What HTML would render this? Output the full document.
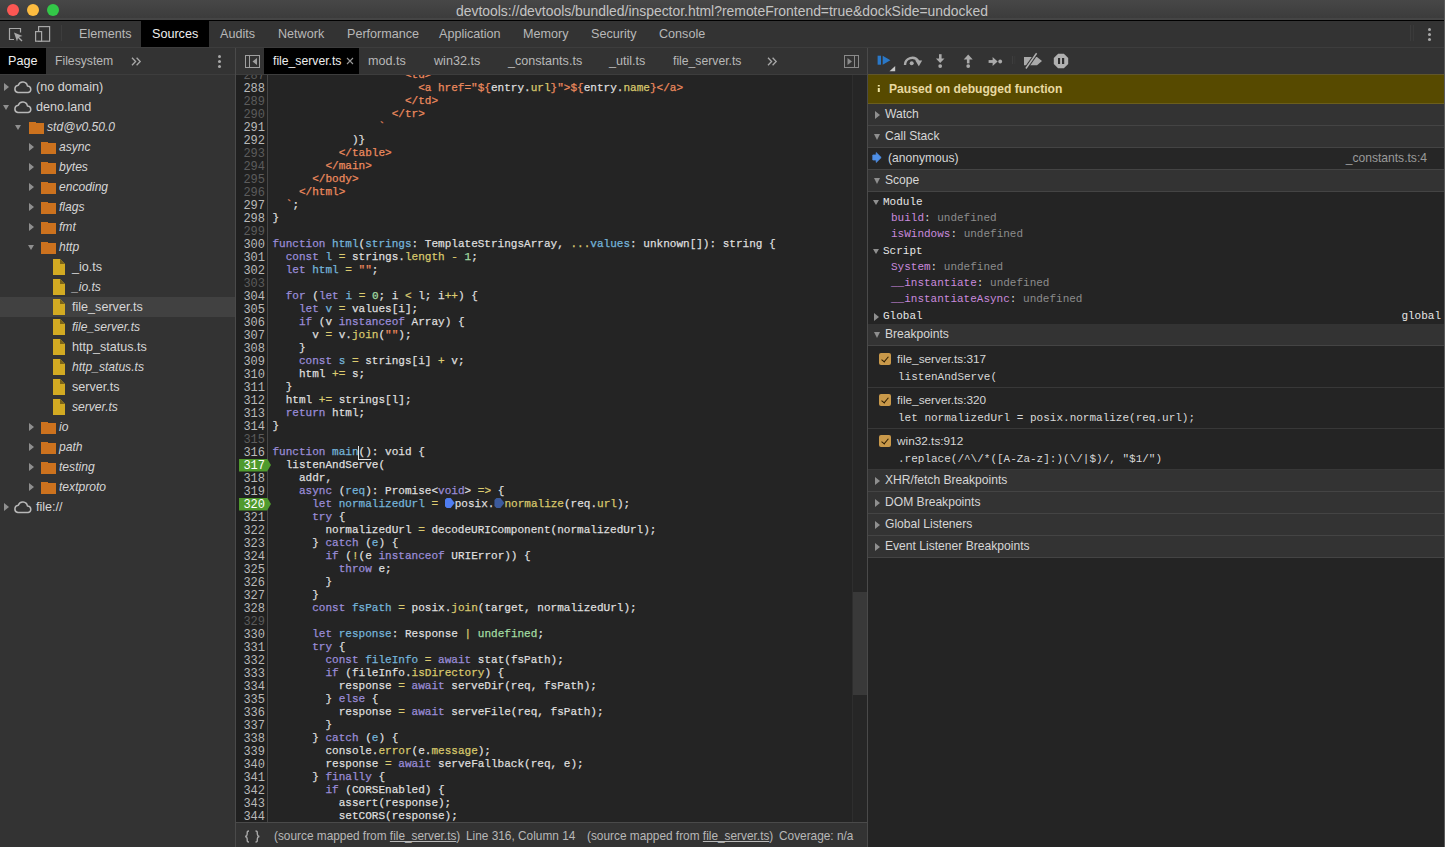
<!DOCTYPE html>
<html><head><meta charset="utf-8">
<style>
*{box-sizing:border-box;margin:0;padding:0}
html,body{width:1445px;height:847px;overflow:hidden;background:#242424;font-family:"Liberation Sans",sans-serif;font-size:12.6px;color:#d0d0d0}
.abs{position:absolute}
/* title bar */
#title{left:0;top:0;width:1445px;height:21px;background:linear-gradient(#474747,#3c3c3c 90%,#454545 90%);border-bottom:1px solid #000}
#title .t{position:absolute;left:456px;top:3px;font-size:13.92px;color:#c4c4c4;white-space:nowrap;letter-spacing:0}
.tl{position:absolute;top:4px;width:12px;height:12px;border-radius:50%}
/* main toolbar */
#mtb{left:0;top:21px;width:1445px;height:27px;background:#333;border-bottom:1px solid #3d3d3d}
.mt{position:absolute;top:0;height:26px;line-height:27px;font-size:12.6px;color:#b8b8b8;white-space:nowrap}.mt.sel{color:#eee}
#mtb .tab{padding:0 12px;height:26px;line-height:27px;color:#b8b8b8;white-space:nowrap}
#mtb .tab.sel{background:#000;color:#eee}
/* sidebar */
#side{left:0;top:48px;width:235px;height:800px;background:#333}
#side .tb{position:absolute;left:0;top:0;width:235px;height:27px;border-bottom:1px solid #3d3d3d}
#side .tab{position:absolute;top:0;height:26px;line-height:26px;color:#b8b8b8}
.tree{position:absolute;left:0;top:29px;width:235px}
.tr{position:relative;height:20px;line-height:20px;white-space:nowrap;color:#d6d6d6}
.tr.it{font-style:italic;font-size:12.1px}
.tr.sel{background:#414141}
.arr{position:absolute;top:6px;width:0;height:0}
.arr.r{border-left:5px solid #8f8f8f;border-top:4px solid transparent;border-bottom:4px solid transparent}
.arr.d{border-top:5px solid #8f8f8f;border-left:3.5px solid transparent;border-right:3.5px solid transparent;top:8px}
.fold{position:absolute;top:6px;width:14.5px;height:11px;background:#cc721e}
.fold:before{content:"";position:absolute;left:0;top:-1.5px;width:7px;height:2px;background:#cc721e}
.file{position:absolute;top:2px;width:12px;height:16px;background:#d2aa22;clip-path:polygon(0 0,7px 0,12px 5px,12px 16px,0 16px)}
.file:after{content:"";position:absolute;left:7px;top:0;width:5px;height:5px;background:#7a6418;clip-path:polygon(0 0,0 100%,100% 100%)}
/* sidebar divider */
#div1{left:235px;top:48px;width:1px;height:800px;background:#4a4a4a}
/* editor */
#etb{left:236px;top:48px;width:631px;height:27px;background:#333;border-bottom:1px solid #3d3d3d}
#etb .tab{position:absolute;top:0;height:26px;line-height:26px;color:#b8b8b8;white-space:nowrap}
#etb .tab.sel{background:#000;color:#eee}
#editor{left:236px;top:75px;width:631px;height:747px;background:#242424;overflow:hidden}
#gutter{position:absolute;left:0;top:-5px;width:32px;background:#202020;height:800px;border-right:1px solid #464646}
.ln{height:13px;line-height:13px;font-family:"Liberation Mono",monospace;font-size:12px;text-align:right;padding-right:2px;color:#b9b9b9;position:relative}
.ln.dim{color:#5c5c5c}
.ln.bp{color:#fff}
.ln.bp:before{content:"";position:absolute;left:3px;top:-1.5px;width:32px;height:13px;background:#4f9a2d;clip-path:polygon(0 0,28px 0,32px 6.5px,28px 13px,0 13px);z-index:-1}
.ln.bp{z-index:1}
.cur{position:relative;display:inline-block;width:0;height:13px;vertical-align:top}.cur:before{content:"";position:absolute;left:-0.5px;top:0;width:1px;height:13px;background:#e8e8e8}.cur:after{content:"";position:absolute;left:-0.5px;top:12.5px;width:13px;height:1px;background:#e8e8e8}
#code{position:absolute;left:36.5px;top:-6px;font-family:"Liberation Mono",monospace;font-size:11.04px;color:#dedede;-webkit-text-stroke:0.25px currentColor}
.cl{height:13px;line-height:13px;white-space:pre}
.k{color:#9a8cd8}.d{color:#74b4da}.o{color:#dccb70}.p{color:#d8c86c}.n{color:#a2dca2}.s{color:#ec8a5e}.a{color:#a2dca2}
.M{display:inline-block;position:relative;width:10px;height:10px;vertical-align:-1px;-webkit-text-stroke:0}.M:before{content:"";position:absolute;left:0;top:0;width:10px;height:10px;background:#4f7df0;clip-path:polygon(2px 0,6px 0,10px 5px,6px 10px,2px 10px,0 8px,0 2px)}.M.d:before{background:#3c5a9c}
#vscroll{left:852px;top:75px;width:15px;height:747px;background:#262626;border-left:1px solid #2e2e2e}
#vthumb{left:853px;top:592px;width:14px;height:103px;background:#393939}
#status{left:236px;top:822px;width:631px;height:25px;background:#333;border-top:1px solid #4a4a4a;white-space:nowrap;color:#b8b8b8}
.st{position:absolute;top:0;line-height:27px;font-size:11.85px}
/* right pane */
#div2{left:867px;top:48px;width:1px;height:800px;background:#4a4a4a}
#right{left:868px;top:48px;width:577px;height:800px;background:#242424}
#rtb{position:absolute;left:0;top:0;width:577px;height:27px;background:#333;border-bottom:1px solid #3d3d3d}
#banner{position:absolute;left:0;top:26px;width:577px;height:30px;background:#574a00;border-top:1px solid #60562a;border-bottom:1px solid #6b5e1c;color:#e8d9a0;font-weight:bold;line-height:28px;font-size:12.1px}
.sh{position:absolute;left:0;width:577px;height:22px;background:#333;border-bottom:1px solid #444;line-height:21px;color:#d6d6d6;font-size:12.1px}
.sh .arr.r{left:7px;top:7px}.sh .arr.d{left:6px;top:8px;border-top-width:6px}
.sh span{position:absolute;left:17px}
.mono{font-family:"Liberation Mono",monospace;font-size:11px}
.keb{position:absolute;width:3px;height:3px;border-radius:1.5px;background:#a8a8a8;box-shadow:0 5px 0 #a8a8a8,0 10px 0 #a8a8a8}
.cs{position:absolute;left:0;width:577px;height:22px;line-height:22px;background:#262626;border-bottom:1px solid #444;color:#d6d6d6}
.sc{position:absolute;white-space:pre;line-height:16px;color:#d9d9d9}
.sc.b{color:#e6e6e6}
.pn{color:#c98ade}.un{color:#8c8c8c}
.bpi{position:absolute;left:0;width:577px;height:41px;border-bottom:1px solid #383838}
.cb{position:absolute;left:11px;top:6px;width:12px;height:12px;border-radius:2px;background:#c9994a}
.cb:after{content:"";position:absolute;left:4px;top:1.5px;width:3px;height:6px;border-right:1.6px solid #2a1a00;border-bottom:1.6px solid #2a1a00;transform:rotate(40deg)}
.bt{position:absolute;left:29px;top:5px;line-height:14px;color:#d6d6d6;font-size:11.8px}
.bc{position:absolute;left:30px;top:23px;line-height:14px;color:#d9d9d9;white-space:pre}

</style></head><body>
<div id="title" class="abs">
  <div class="tl" style="left:7px;background:#fc5753"></div>
  <div class="tl" style="left:27px;background:#fdbc40"></div>
  <div class="tl" style="left:47px;background:#33c748"></div>
  <div class="t">devtools://devtools/bundled/inspector.html?remoteFrontend=true&amp;dockSide=undocked</div>
</div>
<div id="mtb" class="abs">
  <svg style="position:absolute;left:8px;top:6px" width="16" height="15" viewBox="0 0 16 15"><path d="M6 12.5 H1.5 V1.5 H12.5 V5.5" fill="none" stroke="#a8a8a8" stroke-width="1.2"/><path d="M6 5.5 L14.5 9 L11 10 L14.5 13.5 L13.5 14.5 L10 11 L9 14.5 Z" fill="#a8a8a8"/></svg>
  <svg style="position:absolute;left:34px;top:4px" width="18" height="18" viewBox="0 0 18 18"><rect x="4.6" y="1.6" width="11" height="14.6" fill="none" stroke="#a8a8a8" stroke-width="1.2"/><rect x="1.6" y="6.6" width="6" height="9.6" fill="#333" stroke="#a8a8a8" stroke-width="1.2"/></svg>
  <div style="position:absolute;left:61px;top:4px;width:1px;height:16px;background:#3d3d3d"></div>
  <div style="position:absolute;left:1410px;top:4px;width:1px;height:16px;background:#3c3c3c"></div><div style="position:absolute;left:1413px;top:4px;width:1px;height:16px;background:#3a3a3a"></div>
  <div class="keb" style="left:1428px;top:7px"></div>
  <div style="position:absolute;left:141px;top:0;width:68px;height:26px;background:#000"></div>
  <span class="mt" style="left:79px">Elements</span><span class="mt sel" style="left:152px">Sources</span><span class="mt" style="left:220px">Audits</span><span class="mt" style="left:278px">Network</span><span class="mt" style="left:347px">Performance</span><span class="mt" style="left:439px">Application</span><span class="mt" style="left:523px">Memory</span><span class="mt" style="left:591px">Security</span><span class="mt" style="left:659px">Console</span>
</div>
<div id="side" class="abs">
  <div class="tb">
    <div class="tab" style="left:0;width:46px;background:#000;color:#eee;padding-left:8px">Page</div>
    <div class="tab" style="left:55px;font-size:12.2px">Filesystem</div>
    <svg style="position:absolute;left:131px;top:9px" width="11" height="9" viewBox="0 0 11 9"><path d="M1 0.8 L4.6 4.5 L1 8.2 M5.6 0.8 L9.2 4.5 L5.6 8.2" fill="none" stroke="#a8a8a8" stroke-width="1.3"/></svg>
    <div class="keb" style="left:218px;top:7px"></div>
  </div>
  <div class="tree">
<div class="tr"><i class="arr r" style="left:4px"></i><svg class="cloud" width="19" height="13" viewBox="0 0 19 13" style="position:absolute;top:3.5px;left:14px"><path d="M3.8 11.6 A3.7 3.7 0 0 1 4.3 4.3 A4.7 4.7 0 0 1 13.4 4.9 A3.4 3.4 0 0 1 14.2 11.6 Z" fill="none" stroke="#b8b8b8" stroke-width="1.5" stroke-linejoin="round"/></svg><span style="position:absolute;left:36px">(no domain)</span></div>
<div class="tr"><i class="arr d" style="left:3px"></i><svg class="cloud" width="19" height="13" viewBox="0 0 19 13" style="position:absolute;top:3.5px;left:14px"><path d="M3.8 11.6 A3.7 3.7 0 0 1 4.3 4.3 A4.7 4.7 0 0 1 13.4 4.9 A3.4 3.4 0 0 1 14.2 11.6 Z" fill="none" stroke="#b8b8b8" stroke-width="1.5" stroke-linejoin="round"/></svg><span style="position:absolute;left:36px">deno.land</span></div>
<div class="tr it"><i class="arr d" style="left:15px"></i><i class="fold" style="left:29px"></i><span style="position:absolute;left:47px">std@v0.50.0</span></div>
<div class="tr it"><i class="arr r" style="left:29px"></i><i class="fold" style="left:41px"></i><span style="position:absolute;left:59px">async</span></div>
<div class="tr it"><i class="arr r" style="left:29px"></i><i class="fold" style="left:41px"></i><span style="position:absolute;left:59px">bytes</span></div>
<div class="tr it"><i class="arr r" style="left:29px"></i><i class="fold" style="left:41px"></i><span style="position:absolute;left:59px">encoding</span></div>
<div class="tr it"><i class="arr r" style="left:29px"></i><i class="fold" style="left:41px"></i><span style="position:absolute;left:59px">flags</span></div>
<div class="tr it"><i class="arr r" style="left:29px"></i><i class="fold" style="left:41px"></i><span style="position:absolute;left:59px">fmt</span></div>
<div class="tr it"><i class="arr d" style="left:28px"></i><i class="fold" style="left:41px"></i><span style="position:absolute;left:59px">http</span></div>
<div class="tr"><i class="file" style="left:53px"></i><span style="position:absolute;left:72px">_io.ts</span></div>
<div class="tr it"><i class="file" style="left:53px"></i><span style="position:absolute;left:72px">_io.ts</span></div>
<div class="tr sel"><i class="file" style="left:53px"></i><span style="position:absolute;left:72px">file_server.ts</span></div>
<div class="tr it"><i class="file" style="left:53px"></i><span style="position:absolute;left:72px">file_server.ts</span></div>
<div class="tr"><i class="file" style="left:53px"></i><span style="position:absolute;left:72px">http_status.ts</span></div>
<div class="tr it"><i class="file" style="left:53px"></i><span style="position:absolute;left:72px">http_status.ts</span></div>
<div class="tr"><i class="file" style="left:53px"></i><span style="position:absolute;left:72px">server.ts</span></div>
<div class="tr it"><i class="file" style="left:53px"></i><span style="position:absolute;left:72px">server.ts</span></div>
<div class="tr it"><i class="arr r" style="left:29px"></i><i class="fold" style="left:41px"></i><span style="position:absolute;left:59px">io</span></div>
<div class="tr it"><i class="arr r" style="left:29px"></i><i class="fold" style="left:41px"></i><span style="position:absolute;left:59px">path</span></div>
<div class="tr it"><i class="arr r" style="left:29px"></i><i class="fold" style="left:41px"></i><span style="position:absolute;left:59px">testing</span></div>
<div class="tr it"><i class="arr r" style="left:29px"></i><i class="fold" style="left:41px"></i><span style="position:absolute;left:59px">textproto</span></div>
<div class="tr"><i class="arr r" style="left:4px"></i><svg class="cloud" width="19" height="13" viewBox="0 0 19 13" style="position:absolute;top:3.5px;left:14px"><path d="M3.8 11.6 A3.7 3.7 0 0 1 4.3 4.3 A4.7 4.7 0 0 1 13.4 4.9 A3.4 3.4 0 0 1 14.2 11.6 Z" fill="none" stroke="#b8b8b8" stroke-width="1.5" stroke-linejoin="round"/></svg><span style="position:absolute;left:36px">file://</span></div>
  </div>
</div>
<div id="div1" class="abs"></div>
<div id="etb" class="abs">
  <svg style="position:absolute;left:8px;top:6px" width="17" height="15" viewBox="0 0 17 15"><rect x="1.5" y="1.5" width="14" height="12" fill="none" stroke="#a0a0a0" stroke-width="1"/><path d="M5.5 1.5 V13.5" stroke="#a0a0a0" stroke-width="1"/><path d="M13 4 L8.5 7.5 L13 11 Z" fill="#a0a0a0"/></svg>
  <svg style="position:absolute;left:531px;top:9px" width="11" height="9" viewBox="0 0 11 9"><path d="M1 0.8 L4.6 4.5 L1 8.2 M5.6 0.8 L9.2 4.5 L5.6 8.2" fill="none" stroke="#a8a8a8" stroke-width="1.3"/></svg>
  <svg style="position:absolute;left:607px;top:6px" width="17" height="15" viewBox="0 0 17 15"><rect x="1.5" y="1.5" width="14" height="12" fill="none" stroke="#8a8a8a" stroke-width="1"/><path d="M11.5 1.5 V13.5" stroke="#8a8a8a" stroke-width="1"/><path d="M4.5 4 L9 7.5 L4.5 11 Z" fill="#8a8a8a"/></svg>
  <div class="tab sel" style="left:28px;width:95px;padding-left:9px;font-size:12.2px">file_server.ts<svg style="position:absolute;left:82px;top:9px" width="8" height="8" viewBox="0 0 8 8"><path d="M1 1 L7 7 M7 1 L1 7" stroke="#9a9a9a" stroke-width="1.1"/></svg></div>
  <div class="tab" style="left:132px">mod.ts</div>
  <div class="tab" style="left:198px">win32.ts</div>
  <div class="tab" style="left:272px">_constants.ts</div>
  <div class="tab" style="left:373px">_util.ts</div>
  <div class="tab" style="left:437px;font-size:12.2px">file_server.ts</div>
</div>
<div id="editor" class="abs">
  <div id="gutter">
<div class="ln dim">287</div>
<div class="ln">288</div>
<div class="ln dim">289</div>
<div class="ln dim">290</div>
<div class="ln">291</div>
<div class="ln">292</div>
<div class="ln dim">293</div>
<div class="ln dim">294</div>
<div class="ln dim">295</div>
<div class="ln dim">296</div>
<div class="ln">297</div>
<div class="ln">298</div>
<div class="ln dim">299</div>
<div class="ln">300</div>
<div class="ln">301</div>
<div class="ln">302</div>
<div class="ln dim">303</div>
<div class="ln">304</div>
<div class="ln">305</div>
<div class="ln">306</div>
<div class="ln">307</div>
<div class="ln">308</div>
<div class="ln">309</div>
<div class="ln">310</div>
<div class="ln">311</div>
<div class="ln">312</div>
<div class="ln">313</div>
<div class="ln">314</div>
<div class="ln dim">315</div>
<div class="ln">316</div>
<div class="ln bp">317</div>
<div class="ln">318</div>
<div class="ln">319</div>
<div class="ln bp">320</div>
<div class="ln">321</div>
<div class="ln">322</div>
<div class="ln">323</div>
<div class="ln">324</div>
<div class="ln">325</div>
<div class="ln">326</div>
<div class="ln">327</div>
<div class="ln">328</div>
<div class="ln dim">329</div>
<div class="ln">330</div>
<div class="ln">331</div>
<div class="ln">332</div>
<div class="ln">333</div>
<div class="ln">334</div>
<div class="ln">335</div>
<div class="ln">336</div>
<div class="ln">337</div>
<div class="ln">338</div>
<div class="ln">339</div>
<div class="ln">340</div>
<div class="ln">341</div>
<div class="ln">342</div>
<div class="ln">343</div>
<div class="ln">344</div>
<div class="ln">345</div>
  </div>
  <div id="code">
<div class="cl">                    <span class="s">&lt;td&gt;</span></div>
<div class="cl">                      <span class="s">&lt;a href="${</span>entry.<span class="p">url</span><span class="s">}"&gt;${</span>entry.<span class="p">name</span><span class="s">}&lt;/a&gt;</span></div>
<div class="cl">                    <span class="s">&lt;/td&gt;</span></div>
<div class="cl">                  <span class="s">&lt;/tr&gt;</span></div>
<div class="cl">                <span class="s">`</span></div>
<div class="cl">            )}</div>
<div class="cl">          <span class="s">&lt;/table&gt;</span></div>
<div class="cl">        <span class="s">&lt;/main&gt;</span></div>
<div class="cl">      <span class="s">&lt;/body&gt;</span></div>
<div class="cl">    <span class="s">&lt;/html&gt;</span></div>
<div class="cl">  <span class="s">`</span>;</div>
<div class="cl">}</div>
<div class="cl"> </div>
<div class="cl"><span class="k">function</span> <span class="d">html</span>(<span class="d">strings</span>: TemplateStringsArray, <span class="o">...</span><span class="d">values</span>: unknown[]): string {</div>
<div class="cl">  <span class="k">const</span> <span class="d">l</span> <span class="o">=</span> strings.<span class="p">length</span> <span class="o">-</span> <span class="n">1</span>;</div>
<div class="cl">  <span class="k">let</span> <span class="d">html</span> <span class="o">=</span> <span class="s">&quot;&quot;</span>;</div>
<div class="cl"> </div>
<div class="cl">  <span class="k">for</span> (<span class="k">let</span> <span class="d">i</span> <span class="o">=</span> <span class="n">0</span>; i <span class="o">&lt;</span> l; i<span class="o">++</span>) {</div>
<div class="cl">    <span class="k">let</span> <span class="d">v</span> <span class="o">=</span> values[i];</div>
<div class="cl">    <span class="k">if</span> (v <span class="k">instanceof</span> Array) {</div>
<div class="cl">      v <span class="o">=</span> v.<span class="p">join</span>(<span class="s">&quot;&quot;</span>);</div>
<div class="cl">    }</div>
<div class="cl">    <span class="k">const</span> <span class="d">s</span> <span class="o">=</span> strings[i] <span class="o">+</span> v;</div>
<div class="cl">    html <span class="o">+=</span> s;</div>
<div class="cl">  }</div>
<div class="cl">  html <span class="o">+=</span> strings[l];</div>
<div class="cl">  <span class="k">return</span> html;</div>
<div class="cl">}</div>
<div class="cl"> </div>
<div class="cl"><span class="k">function</span> <span class="d">main</span><i class="cur"></i>(): void {</div>
<div class="cl">  listenAndServe(</div>
<div class="cl">    addr,</div>
<div class="cl">    <span class="k">async</span> (<span class="d">req</span>): Promise&lt;<span class="k">void</span>&gt; <span class="o">=&gt;</span> {</div>
<div class="cl">      <span class="k">let</span> <span class="d">normalizedUrl</span> <span class="o">=</span> <i class="M"></i>posix.<i class="M d"></i><span class="p">normalize</span>(req.<span class="p">url</span>);</div>
<div class="cl">      <span class="k">try</span> {</div>
<div class="cl">        normalizedUrl <span class="o">=</span> decodeURIComponent(normalizedUrl);</div>
<div class="cl">      } <span class="k">catch</span> (<span class="d">e</span>) {</div>
<div class="cl">        <span class="k">if</span> (<span class="o">!</span>(e <span class="k">instanceof</span> URIError)) {</div>
<div class="cl">          <span class="k">throw</span> e;</div>
<div class="cl">        }</div>
<div class="cl">      }</div>
<div class="cl">      <span class="k">const</span> <span class="d">fsPath</span> <span class="o">=</span> posix.<span class="p">join</span>(target, normalizedUrl);</div>
<div class="cl"> </div>
<div class="cl">      <span class="k">let</span> <span class="d">response</span>: Response <span class="o">|</span> <span class="a">undefined</span>;</div>
<div class="cl">      <span class="k">try</span> {</div>
<div class="cl">        <span class="k">const</span> <span class="d">fileInfo</span> <span class="o">=</span> <span class="k">await</span> stat(fsPath);</div>
<div class="cl">        <span class="k">if</span> (fileInfo.<span class="p">isDirectory</span>) {</div>
<div class="cl">          response <span class="o">=</span> <span class="k">await</span> serveDir(req, fsPath);</div>
<div class="cl">        } <span class="k">else</span> {</div>
<div class="cl">          response <span class="o">=</span> <span class="k">await</span> serveFile(req, fsPath);</div>
<div class="cl">        }</div>
<div class="cl">      } <span class="k">catch</span> (<span class="d">e</span>) {</div>
<div class="cl">        console.<span class="p">error</span>(e.<span class="p">message</span>);</div>
<div class="cl">        response <span class="o">=</span> <span class="k">await</span> serveFallback(req, e);</div>
<div class="cl">      } <span class="k">finally</span> {</div>
<div class="cl">        <span class="k">if</span> (CORSEnabled) {</div>
<div class="cl">          assert(response);</div>
<div class="cl">          setCORS(response);</div>
<div class="cl">          <span class="k">return</span> req.<span class="p">respond</span>(response);</div>
  </div>
</div>
<div id="vscroll" class="abs"></div>
<div id="vthumb" class="abs"></div>
<div id="status" class="abs">
  <svg style="position:absolute;left:8px;top:7px" width="17" height="13" viewBox="0 0 17 13"><path d="M5 1 C3 1 3.2 2 3.2 4 C3.2 5.6 2.6 6.2 1.2 6.5 C2.6 6.8 3.2 7.4 3.2 9 C3.2 11 3 12 5 12 M11.5 1 C13.5 1 13.3 2 13.3 4 C13.3 5.6 13.9 6.2 15.3 6.5 C13.9 6.8 13.3 7.4 13.3 9 C13.3 11 13.5 12 11.5 12" fill="none" stroke="#a8a8a8" stroke-width="1.4"/></svg>
  <span class="st" style="left:38px">(source mapped from <u>file_server.ts</u>)</span>
  <span class="st" style="left:230px">Line 316, Column 14</span>
  <span class="st" style="left:351px">(source mapped from <u>file_server.ts</u>)</span>
  <span class="st" style="left:543px">Coverage: n/a</span>
</div>
<div id="div2" class="abs"></div>
<div id="right" class="abs">
  <div id="rtb">
    <svg style="position:absolute;left:0;top:0" width="220" height="26" viewBox="0 0 220 26">
      <rect x="9.6" y="7.7" width="3.4" height="9" fill="#2a78c8"/><path d="M14.7 7.7 L22.4 12.2 L14.7 16.7 Z" fill="#2a78c8"/><path d="M27.2 17.9 V23.2 H21.5 Z" fill="#c8c8c8"/>
      <path d="M37 17 A7.2 7.2 0 0 1 50.3 13.2" fill="none" stroke="#aaa" stroke-width="2.4"/><path d="M47.2 12.2 L54.2 12.6 L50.8 18.2 Z" fill="#aaa"/><circle cx="43.7" cy="15.2" r="2" fill="#aaa"/>
      <rect x="71" y="6.2" width="2.6" height="5" fill="#aaa"/><path d="M67.9 10.6 L76.5 10.6 L72.2 15 Z" fill="#aaa"/><circle cx="72.2" cy="18.1" r="1.9" fill="#aaa"/>
      <path d="M95.7 11.4 L104.7 11.4 L100.2 6.6 Z" fill="#aaa"/><rect x="98.9" y="11" width="2.6" height="4.4" fill="#aaa"/><circle cx="100.2" cy="18.1" r="1.9" fill="#aaa"/>
      <rect x="120.6" y="12.1" width="4.6" height="2.8" fill="#aaa"/><path d="M124.6 9 L129.6 13.5 L124.6 18 Z" fill="#aaa"/><circle cx="132.2" cy="13.5" r="1.9" fill="#aaa"/>
      <rect x="144" y="8" width="1" height="8" fill="#3e3e3e"/><rect x="146.3" y="8" width="1" height="8" fill="#3a3a3a"/>
      <path d="M156 9 L169 9 L174 13.1 L169 17.2 L156 17.2 Z" fill="#aaa"/><path d="M157.9 20.5 L168.6 5.2" stroke="#333" stroke-width="3.6"/><path d="M157.9 20.5 L168.6 5.2" stroke="#b0b0b0" stroke-width="1.5"/>
      <path d="M190.1 5.8 L195.9 5.8 L200.2 10.1 L200.2 15.9 L195.9 20.2 L190.1 20.2 L185.8 15.9 L185.8 10.1 Z" fill="#b0b0b0"/><rect x="190" y="10" width="2.1" height="6" fill="#2e2e2e"/><rect x="194" y="10" width="2.2" height="6" fill="#2e2e2e"/>
    </svg>
  </div>
  <div id="banner"><svg style="position:absolute;left:7px;top:9px" width="7" height="10" viewBox="0 0 7 10"><path d="M2.8 1 h2 v1.6 h-2 z M2.8 3.9 h2 v4.2 h-2 z" fill="#f0e6a8"/></svg><span style="position:absolute;left:21px;top:0">Paused on debugged function</span></div>
  <div class="sh" style="top:56px"><i class="arr r"></i><span>Watch</span></div>
  <div class="cs" style="top:100px"><svg style="position:absolute;left:4px;top:4px" width="10" height="11" viewBox="0 0 10 11"><path d="M0.8 3 H4.2 V0.6 L9.2 5.5 L4.2 10.4 V8 H0.8 Z" fill="#4f8fe6" stroke="#4f8fe6" stroke-width="0.8" stroke-linejoin="round"/></svg><span style="position:absolute;left:20px;top:-1px;font-size:12.1px">(anonymous)</span><span style="position:absolute;right:18px;top:-1px;color:#9a9a9a;font-size:12.1px">_constants.ts:4</span></div>
  <div class="mono" style="position:absolute;left:0;top:145px;width:577px;height:132px">
    <i class="arr d" style="left:5px;top:7px"></i><span class="sc b" style="left:15px;top:1px">Module</span>
    <span class="sc" style="left:23px;top:17px"><span class="pn">build</span>: <span class="un">undefined</span></span>
    <span class="sc" style="left:23px;top:33px"><span class="pn">isWindows</span>: <span class="un">undefined</span></span>
    <i class="arr d" style="left:5px;top:56px"></i><span class="sc b" style="left:15px;top:50px">Script</span>
    <span class="sc" style="left:23px;top:66px"><span class="pn">System</span>: <span class="un">undefined</span></span>
    <span class="sc" style="left:23px;top:82px"><span class="pn">__instantiate</span>: <span class="un">undefined</span></span>
    <span class="sc" style="left:23px;top:98px"><span class="pn">__instantiateAsync</span>: <span class="un">undefined</span></span>
    <i class="arr r" style="left:6px;top:119.5px"></i><span class="sc b" style="left:15px;top:115px">Global</span>
    <span class="sc b" style="right:4px;top:115px">global</span>
  </div>
  <div class="sh" style="top:78px"><i class="arr d"></i><span>Call Stack</span></div>
  <div class="sh" style="top:122px"><i class="arr d"></i><span>Scope</span></div>
  <div class="sh" style="top:276px"><i class="arr d"></i><span>Breakpoints</span></div>
  <div class="bpi" style="top:299px"><i class="cb"></i><span class="bt">file_server.ts:317</span><span class="bc mono">listenAndServe(</span></div>
  <div class="bpi" style="top:340px"><i class="cb"></i><span class="bt">file_server.ts:320</span><span class="bc mono">let normalizedUrl = posix.normalize(req.url);</span></div>
  <div class="bpi" style="top:381px;height:41px"><i class="cb"></i><span class="bt">win32.ts:912</span><span class="bc mono">.replace(/^\/*([A-Za-z]:)(\/|$)/, "$1/")</span></div>
  <div class="sh" style="top:422px"><i class="arr r"></i><span>XHR/fetch Breakpoints</span></div>
  <div class="sh" style="top:444px"><i class="arr r"></i><span>DOM Breakpoints</span></div>
  <div class="sh" style="top:466px"><i class="arr r"></i><span>Global Listeners</span></div>
  <div class="sh" style="top:488px"><i class="arr r"></i><span>Event Listener Breakpoints</span></div>
</div>
<div style="position:absolute;left:1444px;top:0;width:1px;height:847px;background:#5a5a5a"></div>
</body></html>
